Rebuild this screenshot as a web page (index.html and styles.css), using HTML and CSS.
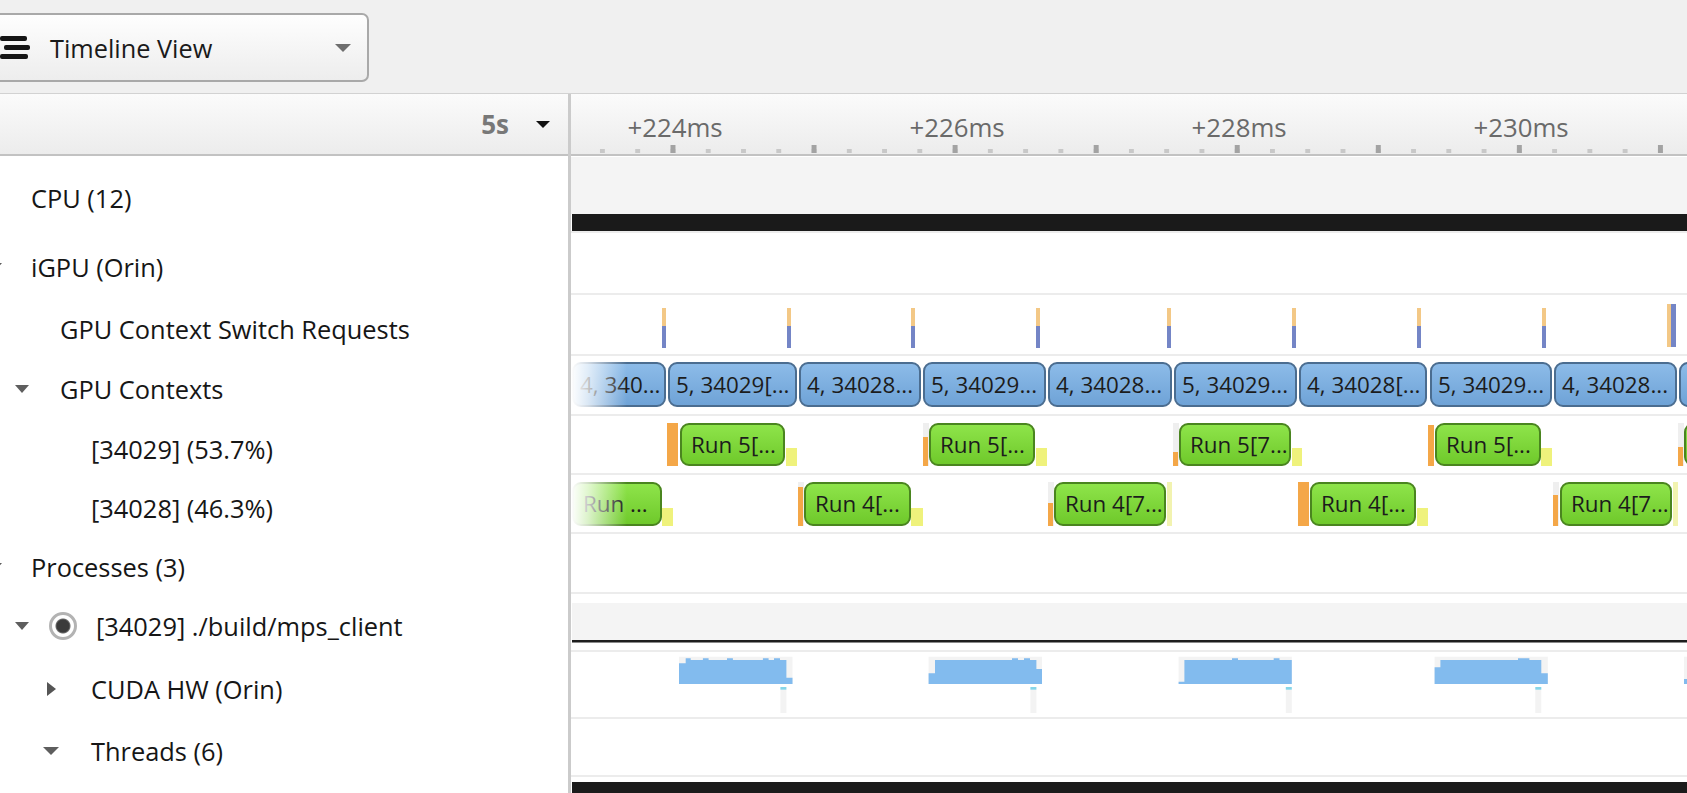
FILE: index.html
```html
<!DOCTYPE html>
<html>
<head>
<meta charset="utf-8">
<title>Timeline View</title>
<link rel="stylesheet" href="styles.css">
</head>
<body>
<div class="app">
  <div class="toolbar">
    <div class="viewsel">
      <span class="hamb"><i class="b1"></i><i class="b2"></i><i class="b3"></i></span>
      <span class="viewsel-label">Timeline View</span>
      <span class="caret"></span>
    </div>
  </div>

  <div class="main">
    <div class="tree">
      <div class="tree-head"><span class="zoomval">5s</span><span class="caret-sm"></span></div>
      <div class="trow r-cpu l0"><span class="lbl">CPU (12)</span></div>
      <div class="trow r-igpu l0"><span class="tw tw-cut"></span><span class="lbl">iGPU (Orin)</span></div>
      <div class="trow r-csr l1"><span class="lbl">GPU Context Switch Requests</span></div>
      <div class="trow r-gpuc row-gpuc"><span class="tw"></span><span class="lbl">GPU Contexts</span></div>
      <div class="trow r-c29 l2"><span class="lbl">[34029] (53.7%)</span></div>
      <div class="trow r-c28 l2"><span class="lbl">[34028] (46.3%)</span></div>
      <div class="trow r-proc l0"><span class="tw tw-cut"></span><span class="lbl">Processes (3)</span></div>
      <div class="trow r-mps row-mps"><span class="tw"></span><span class="radio"></span><span class="lbl">[34029] ./build/mps_client</span></div>
      <div class="trow r-cuda row-cuda"><span class="tw-right"></span><span class="lbl">CUDA HW (Orin)</span></div>
      <div class="trow r-thr row-thr"><span class="tw tw-lg"></span><span class="lbl">Threads (6)</span></div>
      <div class="trow r-last"></div>
    </div>

    <div class="split"></div>

    <div class="tl">
      <div class="ruler">
        <span class="tick-label" style="left:104px">+224ms</span>
        <span class="tick-label" style="left:386px">+226ms</span>
        <span class="tick-label" style="left:668px">+228ms</span>
        <span class="tick-label" style="left:950px">+230ms</span>
        <div class="ticks"></div>
      </div>

      <div class="lane r-cpu lane-cpu">
        <div class="cpu-top"></div>
        <div class="cpu-bar"></div>
      </div>

      <div class="lane r-igpu"></div>

      <div class="lane r-csr">
        <span class="csr" style="left:91px"></span>
        <span class="csr" style="left:216px"></span>
        <span class="csr" style="left:340px"></span>
        <span class="csr" style="left:465px"></span>
        <span class="csr" style="left:596px"></span>
        <span class="csr" style="left:721px"></span>
        <span class="csr" style="left:846px"></span>
        <span class="csr" style="left:971px"></span>
        <span class="csr csr-tall csr-tan" style="left:1096px"></span>
        <span class="csr csr-tall csr-blue" style="left:1100px"></span>
      </div>

      <div class="lane r-gpuc">
        <div class="ctx" style="left:1px;width:94px">4, 340...</div>
        <div class="ctx" style="left:97px;width:129px">5, 34029[...</div>
        <div class="ctx" style="left:228px;width:122px">4, 34028...</div>
        <div class="ctx" style="left:352px;width:123px">5, 34029...</div>
        <div class="ctx" style="left:477px;width:124px">4, 34028...</div>
        <div class="ctx" style="left:603px;width:123px">5, 34029...</div>
        <div class="ctx" style="left:728px;width:128px">4, 34028[...</div>
        <div class="ctx" style="left:859px;width:122px">5, 34029...</div>
        <div class="ctx" style="left:983px;width:123px">4, 34028...</div>
        <div class="ctx" style="left:1108px;width:60px"></div>
        <div class="fade"></div>
      </div>

      <div class="lane r-c29">
        <span class="org" style="left:96px;width:11px;top:7px;height:43px"></span>
        <div class="run" style="left:109px;width:105px">Run 5[...</div>
        <span class="yel" style="left:215px;width:11px"></span>

        <span class="strip" style="left:352px;width:6px"></span>
        <span class="org" style="left:352px;width:5px;top:21px;height:29px"></span>
        <div class="run" style="left:358px;width:106px">Run 5[...</div>
        <span class="yel" style="left:465px;width:11px"></span>

        <span class="strip" style="left:602px;width:6px"></span>
        <span class="org" style="left:602px;width:5px;top:36px;height:14px"></span>
        <div class="run" style="left:608px;width:112px">Run 5[7...</div>
        <span class="yel" style="left:721px;width:10px"></span>

        <span class="org" style="left:857px;width:6px;top:9px;height:41px"></span>
        <div class="run" style="left:864px;width:106px">Run 5[...</div>
        <span class="yel" style="left:970px;width:11px"></span>

        <span class="strip" style="left:1107px;width:6px"></span>
        <span class="org" style="left:1107px;width:5px;top:31px;height:19px"></span>
        <div class="run" style="left:1113px;width:60px"></div>
      </div>

      <div class="lane r-c28">
        <div class="run run28" style="left:1px;width:90px">Run ...</div>
        <span class="yel yel28" style="left:91px;width:11px"></span>

        <span class="strip strip28" style="left:227px;width:6px"></span>
        <span class="org" style="left:227px;width:5px;top:12px;height:39px"></span>
        <div class="run run28" style="left:233px;width:107px">Run 4[...</div>
        <span class="yel yel28" style="left:340px;width:12px"></span>

        <span class="strip strip28" style="left:477px;width:6px"></span>
        <span class="org" style="left:477px;width:5px;top:28px;height:23px"></span>
        <div class="run run28" style="left:483px;width:112px">Run 4[7...</div>
        <span class="yel yel-thin" style="left:596px;width:5px"></span>

        <span class="org" style="left:727px;width:11px;top:7px;height:44px"></span>
        <div class="run run28" style="left:739px;width:106px">Run 4[...</div>
        <span class="yel yel28" style="left:846px;width:11px"></span>

        <span class="strip strip28" style="left:982px;width:6px"></span>
        <span class="org" style="left:982px;width:5px;top:20px;height:31px"></span>
        <div class="run run28" style="left:989px;width:112px">Run 4[7...</div>
        <span class="yel yel-thin" style="left:1102px;width:5px"></span>
        <div class="fade"></div>
      </div>

      <div class="lane r-proc"></div>

      <div class="lane r-mps lane-mps">
        <div class="mps-band"></div>
        <div class="mps-line"></div>
      </div>

      <div class="lane r-cuda">
        <svg class="cuda" width="1116" height="65" viewBox="0 0 1116 65">
          <g class="cbg">
            <rect x="108" y="4.7" width="113.5" height="27.3"/>
            <rect x="357.6" y="4.7" width="113.4" height="27.3"/>
            <rect x="607.6" y="4.7" width="113.2" height="27.3"/>
            <rect x="863.6" y="4.7" width="113.2" height="27.3"/>
            <rect x="1113" y="4.7" width="10" height="27.3"/>
            <rect x="209.4" y="37.7" width="6" height="23.3"/>
            <rect x="459.4" y="37.7" width="6" height="23.3"/>
            <rect x="714.8" y="37.7" width="6" height="23.3"/>
            <rect x="964.3" y="37.7" width="6" height="23.3"/>
          </g>
          <g class="cfill">
            <path d="M108 32 V11.3 H114.7 V6.3 H119.7 V8 H131.9 V6.3 H137.6 V8 H156 V6.3 H161.9 V8 H191.9 V6.3 H197.6 V8 H203 V6.3 H209 V8 H215.4 V25.7 H221.5 V32 Z"/>
            <path d="M357.6 32 V21.3 H364 V8 H441 V6.3 H447 V8 H453 V6.3 H459 V8 H465.4 V17 H471 V32 Z"/>
            <path d="M607.6 32 V29.7 H613.4 V8 H661 V6.3 H667 V8 H702.7 V6.3 H708.5 V8 H720.8 V32 Z"/>
            <path d="M863.6 32 V15.3 H869.4 V8 H947 V6.3 H958.4 V8 H970.3 V21.3 H976.8 V32 Z"/>
            <rect x="1113" y="27" width="10" height="5"/>
          </g>
          <g class="ccyan">
            <rect x="209.4" y="35" width="6" height="2.7"/>
            <rect x="459.4" y="35" width="6" height="2.7"/>
            <rect x="714.8" y="35" width="6" height="2.7"/>
            <rect x="964.3" y="35" width="6" height="2.7"/>
          </g>
        </svg>
      </div>

      <div class="lane r-thr"></div>

      <div class="lane r-last lane-last">
        <div class="last-bar"></div>
      </div>
    </div>
  </div>
</div>
</body>
</html>
```

FILE: styles.css
```css
* {
  box-sizing: border-box;
  margin: 0;
  padding: 0;
}

html, body {
  width: 1687px;
  height: 793px;
  overflow: hidden;
  background: #ffffff;
}

body {
  font-family: "Open Sans", "Noto Sans", sans-serif;
  color: #1b1b1b;
}

.app {
  display: flex;
  flex-direction: column;
  height: 793px;
}

/* ---------- toolbar ---------- */
.toolbar {
  flex: none;
  height: 94px;
  background: #f0f0f0;
  border-bottom: 1px solid #d2d2d2;
  padding-top: 13px;
}

.viewsel {
  width: 375px;
  height: 69px;
  margin-left: -6px;
  border: 2px solid #a9a9a9;
  border-radius: 7px;
  background: linear-gradient(#fefefe, #ededed);
  display: flex;
  align-items: center;
  padding-left: 4px;
  padding-right: 16px;
}

.hamb {
  width: 30px;
  display: flex;
  flex-direction: column;
  gap: 4.5px;
}

.hamb i {
  display: block;
  height: 4.5px;
  background: #151515;
  border-radius: 2px;
}

.hamb .b1 { width: 27px; }
.hamb .b2 { width: 26px; margin-left: 4px; }
.hamb .b3 { width: 28px; }

.viewsel-label {
  margin-left: 20px;
  font-size: 25.3px;
  color: #1a1a1a;
  line-height: 30px;
}

.caret {
  margin-left: auto;
  width: 0;
  height: 0;
  border-left: 8px solid transparent;
  border-right: 8px solid transparent;
  border-top: 8px solid #6e6e6e;
}

/* ---------- main ---------- */
.main {
  flex: 1;
  display: flex;
  min-height: 0;
}

.tree {
  width: 568px;
  flex: none;
  display: flex;
  flex-direction: column;
  overflow: hidden;
}

.split {
  width: 3px;
  flex: none;
  background: #cbcbcb;
}

.tl {
  flex: 1;
  display: flex;
  flex-direction: column;
  overflow: hidden;
}

/* headers */
.tree-head,
.ruler {
  flex: none;
  height: 62px;
  border-bottom: 2px solid #c2c2c2;
  background: linear-gradient(#fbfbfb, #ececec);
}

.tree-head {
  display: flex;
  align-items: center;
  justify-content: flex-end;
  padding-right: 18px;
}

.zoomval {
  font-size: 26px;
  font-weight: 700;
  color: #787878;
  line-height: 30px;
}

.caret-sm {
  margin-left: 27px;
  width: 0;
  height: 0;
  border-left: 7px solid transparent;
  border-right: 7px solid transparent;
  border-top: 7px solid #111;
}

.ruler {
  position: relative;
}

.tick-label {
  position: absolute;
  top: 18px;
  transform: translateX(-50%);
  font-size: 25.8px;
  line-height: 30px;
  color: #6a6a6a;
  white-space: nowrap;
}

.ticks {
  position: absolute;
  left: 0;
  right: 0;
  bottom: 1px;
  height: 8px;
  background-image:
    linear-gradient(to right, #a3a3a3 0 5px, transparent 5px),
    linear-gradient(to right, #c8c8c8 0 5px, transparent 5px);
  background-size: 141.07px 8px, 35.2675px 4px;
  background-position: 99.5px 0, 99.5px 4px;
  background-repeat: repeat-x;
}

/* row heights (shared by tree and lanes) */
.r-cpu { height: 77px; }
.r-igpu { height: 62px; }
.r-csr { height: 61px; }
.r-gpuc { height: 60px; }
.r-c29 { height: 59px; }
.r-c28 { height: 59px; }
.r-proc { height: 60px; }
.r-mps { height: 58px; }
.r-cuda { height: 67px; }
.r-thr { height: 58px; }
.r-last { flex: 1; }

/* ---------- tree rows ---------- */
.trow {
  flex: none;
  display: flex;
  align-items: center;
  padding-top: 6px;
  font-size: 25.4px;
  line-height: 30px;
  white-space: nowrap;
  color: #161616;
}

.trow.r-last { flex: 1; }

.l0 { padding-left: 31px; }
.l1 { padding-left: 60px; }
.l2 { padding-left: 91px; }

.tw {
  flex: none;
  width: 0;
  height: 0;
  border-left: 7px solid transparent;
  border-right: 7px solid transparent;
  border-top: 8px solid #5e5e5e;
}

.tw-lg {
  border-left-width: 8px;
  border-right-width: 8px;
}

.tw-cut {
  margin-left: -43px;
  margin-right: 29px;
}

.tw-right {
  flex: none;
  width: 0;
  height: 0;
  border-top: 7.5px solid transparent;
  border-bottom: 7.5px solid transparent;
  border-left: 9px solid #555;
}

.row-gpuc { padding-left: 15px; }
.row-gpuc .lbl { margin-left: 31px; }

.row-mps { padding-left: 15px; }
.row-mps .lbl { margin-left: 19px; }

.radio {
  flex: none;
  margin-left: 20px;
  width: 28px;
  height: 28px;
  border-radius: 50%;
  border: 3px solid #b3b3b3;
  background: radial-gradient(circle, #3b3b3b 0 6px, #6a6a6a 7px, #ffffff 8px);
}

.row-cuda { padding-left: 47px; }
.row-cuda .lbl { margin-left: 35px; }

.row-thr { padding-left: 43px; }
.row-thr .lbl { margin-left: 32px; }

/* ---------- lanes ---------- */
.lane {
  flex: none;
  position: relative;
  overflow: hidden;
  border-bottom: 2px solid #ececec;
}

.lane.r-last {
  flex: 1;
  border-bottom: 0;
}

.lane-cpu {
  display: flex;
  flex-direction: column;
}

.cpu-top {
  margin-top: 1px;
  height: 57px;
  background: #f4f4f4;
}

.cpu-bar {
  margin-left: 1px;
  height: 17px;
  background: #1a1a1a;
}

.lane-mps {
  display: flex;
  flex-direction: column;
}

.mps-band {
  margin-top: 9px;
  margin-left: 1px;
  height: 37px;
  background: #f4f4f4;
}

.mps-line {
  margin-left: 1px;
  height: 3px;
  background: #1e1e1e;
  border-bottom: 1px solid #8a8a8a;
}

.lane-last {
  display: flex;
  flex-direction: column;
}

.last-bar {
  margin-top: 5px;
  margin-left: 1px;
  flex: 1;
  background: #1b1b1b;
}

/* context switch ticks */
.csr {
  position: absolute;
  top: 13px;
  width: 4px;
  height: 40px;
  background: linear-gradient(#f3c886 0 18px, #7485c6 18px);
}

.csr-tall {
  top: 9px;
  height: 43px;
}

.csr-tan { background: #f3c886; }
.csr-blue { background: #7485c6; width: 5px; }

/* gpu context boxes */
.ctx {
  position: absolute;
  top: 6px;
  height: 45px;
  border: 2px solid #4b6d90;
  border-radius: 9px;
  background: linear-gradient(#8cbbe8, #6fa3d7);
  padding: 0 6px;
  font-size: 22.4px;
  line-height: 41px;
  color: #1c1c1c;
  white-space: nowrap;
  overflow: hidden;
}

/* runs */
.run {
  position: absolute;
  top: 7px;
  height: 43px;
  border: 2px solid #4a851f;
  border-radius: 9px;
  background: linear-gradient(#8ee44a, #6fc92b);
  padding: 0 9px;
  font-size: 22.4px;
  line-height: 39px;
  color: #1c1c1c;
  white-space: nowrap;
  overflow: hidden;
}

.run28 {
  height: 44px;
  line-height: 40px;
}

.org {
  position: absolute;
  background: #f4a748;
}

.strip {
  position: absolute;
  top: 7px;
  height: 43px;
  background: #efefef;
}

.strip28 { height: 44px; }

.yel {
  position: absolute;
  top: 32px;
  height: 18px;
  background: #eff27c;
}

.yel28 {
  top: 33px;
  height: 18px;
}

.yel-thin {
  top: 7px;
  height: 44px;
  background: #f2f3b0;
}

.fade {
  position: absolute;
  left: 0;
  top: 0;
  bottom: 0;
  width: 56px;
  background: linear-gradient(to right, rgba(255,255,255,1) 0, rgba(255,255,255,0.75) 30%, rgba(255,255,255,0) 100%);
}

/* cuda chart */
.cuda {
  position: absolute;
  left: 0;
  top: 0;
  display: block;
}

.cbg rect { fill: #f3f3f3; }
.cfill path, .cfill rect { fill: #82bbee; }
.ccyan rect { fill: #86d5e8; }
```
